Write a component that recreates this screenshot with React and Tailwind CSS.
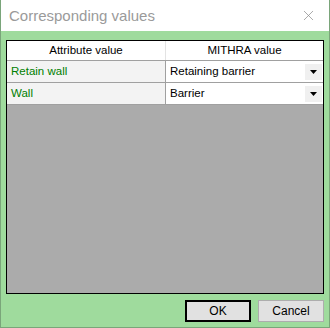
import { X } from 'lucide-react';

const rows = [
  { attr: 'Retain wall', mithra: 'Retaining barrier' },
  { attr: 'Wall', mithra: 'Barrier' },
];

function Arrow() {
  return (
    <svg width="7" height="4" viewBox="0 0 7 4">
      <path d="M0 0 H7 L3.5 4 Z" fill="#000" />
    </svg>
  );
}

export default function App() {
  return (
    <div
      className="w-[330px] h-[328px] flex flex-col bg-[#9fdb9d] border-x border-b border-[#7aa57a] text-[11.5px] leading-none"
      style={{ fontFamily: '"Segoe UI", "Liberation Sans", Arial, sans-serif' }}
    >
      {/* title bar */}
      <div className="h-[31px] shrink-0 bg-white flex items-center justify-between pl-[8px] pr-[12px]">
        <span className="text-[#9a9a9a] text-[15px]">Corresponding values</span>
        <X size={17} strokeWidth={1} color="#888" />
      </div>

      <div className="flex-1 flex flex-col px-[5px] pt-[9px] pb-[5px]">
        {/* grid */}
        <div className="h-[254px] border border-black bg-[#ababab] flex flex-col">
          <div className="h-[20px] bg-white flex border-b border-[#a0a0a0]">
            <div className="w-[159px] border-r border-[#e3e3e3] flex items-center justify-center">Attribute value</div>
            <div className="flex-1 flex items-center justify-center">MITHRA value</div>
          </div>
          {rows.map((r, i) => (
            <div key={i} className="h-[22px] flex border-b border-[#a0a0a0]">
              <div className="w-[159px] bg-[#f3f3f3] border-r border-[#a0a0a0] flex items-center pl-[4px] text-[#008000]">
                {r.attr}
              </div>
              <div className="flex-1 bg-white flex items-center justify-between pl-[4px] pr-[1px]">
                <span>{r.mithra}</span>
                <div className="w-[17px] h-[16px] bg-[#f0f0f0] flex items-center justify-center">
                  <Arrow />
                </div>
              </div>
            </div>
          ))}
        </div>

        {/* buttons */}
        <div className="flex justify-end gap-[7px] mt-[6px]">
          <button className="w-[66px] h-[22px] border-2 border-black bg-[#e1e1e1] flex items-center justify-center text-[12px]">OK</button>
          <button className="w-[66px] h-[22px] border border-[#adadad] bg-[#e1e1e1] flex items-center justify-center text-[12px]">Cancel</button>
        </div>
      </div>
    </div>
  );
}
